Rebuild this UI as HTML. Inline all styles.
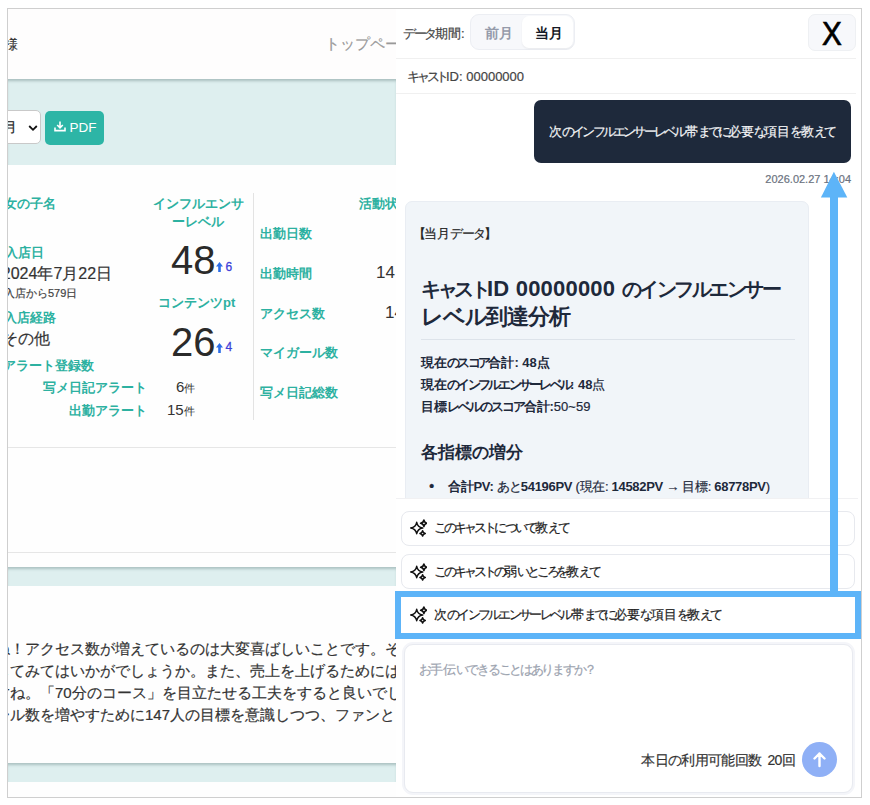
<!DOCTYPE html>
<html><head><meta charset="utf-8">
<style>
*{box-sizing:border-box;margin:0;padding:0}
html,body{width:870px;height:805px;background:#fff;overflow:hidden;font-family:"Liberation Sans",sans-serif;color:#333}
.a{position:absolute;white-space:nowrap;-webkit-text-stroke:0.2px currentColor}
b,.bd{-webkit-text-stroke:0}
#frame{position:absolute;left:7px;top:8px;width:855px;height:790px;border:1px solid #cfcfcf;overflow:hidden;background:#fefefe}
#left{position:absolute;left:0;top:0;width:388px;height:788px;overflow:hidden}
#panel{position:absolute;left:388px;top:0;width:465px;height:788px;background:#fff;overflow:hidden}
</style></head><body>
<div id="frame">
<div id="left">
<div class="a" style="left:0px;top:0px;width:388px;height:70px;background:#fefdfd"></div>
<div class="a" style="top:25.50px;font-size:14px;line-height:18px;color:#333;left:-4.00px;">様</div>
<div class="a" style="top:26.00px;font-size:15px;line-height:18px;color:#999;left:317.00px;">トップページ</div>
<div class="a" style="left:0px;top:70px;width:388px;height:86px;background:#deefef;box-shadow:inset 0 3px 3px -1px #a9bfbf"></div>
<div class="a" style="left:-20px;top:101px;width:53px;height:34px;background:#fff;border:1px solid #c9c9c9;border-radius:5px"></div>
<div class="a" style="top:109.00px;font-size:14px;line-height:18px;color:#222;left:-5.00px;">月</div>
<svg class="a" style="left:20px;top:115px" width="10" height="8" viewBox="0 0 10 8"><path d="M1.2 2 L5 5.8 L8.8 2" fill="none" stroke="#111" stroke-width="1.8"/></svg>
<div class="a" style="left:37px;top:102px;width:59px;height:34px;background:#2db5a6;border-radius:5px"></div>
<svg class="a" style="left:46px;top:112px" width="12" height="11" viewBox="0 0 12 11"><path d="M6 0.5 V6.5 M3.2 4 L6 6.8 L8.8 4 M1 6.5 V9.6 H11 V6.5" fill="none" stroke="#fff" stroke-width="1.6"/></svg>
<div class="a" style="top:109.50px;font-size:13.5px;line-height:18px;color:#fff;left:61.50px;-webkit-text-stroke:0;">PDF</div>
<div class="a" style="top:186.00px;font-size:13px;line-height:18px;color:#2db1a1;left:-3.60px;font-weight:bold;-webkit-text-stroke:0;">女の子名</div>
<div class="a" style="top:235.00px;font-size:13px;line-height:18px;color:#2db1a1;left:-3.50px;font-weight:bold;-webkit-text-stroke:0;">入店日</div>
<div class="a" style="top:255.00px;font-size:16px;line-height:20px;color:#333;left:-6.20px;">2024年7月22日</div>
<div class="a" style="top:277.00px;font-size:11px;line-height:14px;color:#444;left:-4.00px;">入店から579日</div>
<div class="a" style="top:300.00px;font-size:13px;line-height:18px;color:#2db1a1;left:-4.30px;font-weight:bold;-webkit-text-stroke:0;">入店経路</div>
<div class="a" style="top:319.50px;font-size:16px;line-height:20px;color:#333;left:-6.00px;">その他</div>
<div class="a" style="top:348.00px;font-size:13px;line-height:18px;color:#2db1a1;left:-5.40px;font-weight:bold;-webkit-text-stroke:0;">アラート登録数</div>
<div class="a" style="top:370.00px;font-size:13px;line-height:18px;color:#2db1a1;left:34.50px;font-weight:bold;-webkit-text-stroke:0;">写メ日記アラート</div>
<div class="a" style="top:393.00px;font-size:13px;line-height:18px;color:#2db1a1;left:60.50px;font-weight:bold;-webkit-text-stroke:0;">出勤アラート</div>
<div class="a" style="top:369.00px;font-size:15px;line-height:18px;color:#333;left:168.00px;-webkit-text-stroke:0;">6<span style="font-size:11px">件</span></div>
<div class="a" style="top:392.00px;font-size:15px;line-height:18px;color:#333;left:159.00px;-webkit-text-stroke:0;">15<span style="font-size:11px">件</span></div>
<div class="a" style="left:142px;top:185.5px;width:96px;font-size:13px;line-height:18px;text-align:center;white-space:normal;color:#2db1a1;font-weight:bold;-webkit-text-stroke:0;">インフルエンサーレベル</div>
<div class="a" style="top:229.00px;font-size:40px;line-height:44px;color:#2a2a2a;left:163.00px;-webkit-text-stroke:0;">48</div>
<svg class="a" style="left:208px;top:253.0px" width="7" height="10" viewBox="0 0 7 10"><path d="M3.5 0 L7 4.6 L4.8 4.6 L4.8 10 L2.2 10 L2.2 4.6 L0 4.6Z" fill="#2b6de8"/></svg>
<div class="a" style="top:249.50px;font-size:12px;line-height:16px;color:#3f3fd8;left:217.50px;-webkit-text-stroke:0.3px #3f3fd8;">6</div>
<div class="a" style="top:285.00px;font-size:13px;line-height:18px;color:#2db1a1;left:150.00px;font-weight:bold;-webkit-text-stroke:0;">コンテンツpt</div>
<div class="a" style="top:310.50px;font-size:40px;line-height:44px;color:#2a2a2a;left:163.00px;-webkit-text-stroke:0;">26</div>
<svg class="a" style="left:208px;top:333.5px" width="7" height="10" viewBox="0 0 7 10"><path d="M3.5 0 L7 4.6 L4.8 4.6 L4.8 10 L2.2 10 L2.2 4.6 L0 4.6Z" fill="#2b6de8"/></svg>
<div class="a" style="top:330.00px;font-size:12px;line-height:16px;color:#3f3fd8;left:217.50px;-webkit-text-stroke:0.3px #3f3fd8;">4</div>
<div class="a" style="left:244.5px;top:184px;width:1px;height:227px;background:#e3e3e3"></div>
<div class="a" style="top:186.00px;font-size:13px;line-height:18px;color:#2db1a1;left:351.00px;font-weight:bold;-webkit-text-stroke:0;">活動状況</div>
<div class="a" style="top:216.00px;font-size:13px;line-height:18px;color:#2db1a1;left:252.00px;font-weight:bold;-webkit-text-stroke:0;">出勤日数</div>
<div class="a" style="top:256.00px;font-size:13px;line-height:18px;color:#2db1a1;left:252.00px;font-weight:bold;-webkit-text-stroke:0;">出勤時間</div>
<div class="a" style="top:295.50px;font-size:13px;line-height:18px;color:#2db1a1;left:252.00px;font-weight:bold;-webkit-text-stroke:0;">アクセス数</div>
<div class="a" style="top:335.00px;font-size:13px;line-height:18px;color:#2db1a1;left:252.00px;font-weight:bold;-webkit-text-stroke:0;">マイガール数</div>
<div class="a" style="top:375.30px;font-size:13px;line-height:18px;color:#2db1a1;left:252.00px;font-weight:bold;-webkit-text-stroke:0;">写メ日記総数</div>
<div class="a" style="top:254.00px;font-size:17px;line-height:20px;color:#333;left:368.00px;-webkit-text-stroke:0;">14</div>
<div class="a" style="top:294.00px;font-size:17px;line-height:20px;color:#333;left:377.00px;-webkit-text-stroke:0;">14582</div>
<div class="a" style="left:0px;top:438px;width:388px;height:1px;background:#e6e6e6"></div>
<div class="a" style="left:0px;top:543px;width:388px;height:1px;background:#e6e6e6"></div>
<div class="a" style="left:0px;top:558px;width:388px;height:19px;background:#deefef;box-shadow:inset 0 3px 3px -1px #abc1c1"></div>
<div class="a" style="left:-13px;top:629.2px;font-size:15px;line-height:22.1px;color:#333">ね！アクセス数が増えているのは大変喜ばしいことです。そ<br>してみてはいかがでしょうか。また、売上を上げるためには<br>すね。「70分のコース」を目立たせる工夫をすると良いでしょう<br>ール数を増やすために147人の目標を意識しつつ、ファンと</div>
<div class="a" style="left:0px;top:754px;width:388px;height:19px;background:#deefef;box-shadow:inset 0 3px 3px -1px #abc1c1"></div>
</div>
<div id="panel">
<div class="a" style="top:16.00px;font-size:13px;line-height:18px;color:#444;left:7.00px;"><span style="letter-spacing:-2.333px">データ</span>期間:</div>
<div class="a" style="left:74px;top:5px;width:105px;height:36px;background:#f7f8fb;border:1px solid #eceef3;border-radius:9px"></div>
<div class="a" style="left:126px;top:7px;width:51px;height:32px;background:#fff;border-radius:7px;box-shadow:0 1px 2px rgba(0,0,0,.06)"></div>
<div class="a" style="top:15.00px;font-size:14px;line-height:18px;color:#959baa;left:88.50px;font-weight:bold;-webkit-text-stroke:0;">前月</div>
<div class="a" style="top:15.00px;font-size:14px;line-height:18px;color:#151a26;left:138.50px;font-weight:bold;-webkit-text-stroke:0;">当月</div>
<div class="a" style="left:412px;top:5px;width:48px;height:37px;background:#f7f8fb;border:1px solid #eef0f3;border-radius:7px"></div>
<div class="a" style="left:412px;top:6px;width:48px;height:37px;line-height:37px;font-size:33px;color:#000;text-align:center;transform:scaleX(0.9);-webkit-text-stroke:0.7px #000">X</div>
<div class="a" style="left:0px;top:49px;width:460px;height:1px;background:#f0f0f0"></div>
<div class="a" style="top:59.00px;font-size:13px;line-height:18px;color:#444;left:11.00px;"><span style="letter-spacing:-3.25px">キャスト</span>ID: 00000000</div>
<div class="a" style="left:0px;top:84px;width:460px;height:1px;background:#f0f0f0"></div>
<div class="a" style="left:138px;top:91px;width:317px;height:63px;background:#1e293b;border-radius:7px"></div>
<div class="a" style="top:114.00px;font-size:13px;line-height:18px;color:#f3f4f6;left:153.00px;">次<span style="letter-spacing:-2.789px">のインフルエンサーレベル</span>帯<span style="letter-spacing:-2.789px">までに</span>必要<span style="letter-spacing:-2.789px">な</span>項目<span style="letter-spacing:-2.789px">を</span>教<span style="letter-spacing:-2.789px">えて</span></div>
<div class="a" style="top:162.00px;font-size:11px;line-height:16px;color:#6b7280;left:335.00px;width:120px;text-align:right;">2026.02.27 14:04</div>
<div class="a" style="left:9px;top:192px;width:404px;height:330px;background:#f1f5f9;border:1px solid #e9edf3;border-radius:7px"></div>
<div class="a" style="top:216.00px;font-size:13px;line-height:18px;color:#222;left:17.00px;"><span style="letter-spacing:-1.74px">【</span>当月<span style="letter-spacing:-1.74px">データ】</span></div>
<div class="a" style="left:25px;top:265.5px;font-size:22px;line-height:28.5px;color:#1e293b;font-weight:bold;-webkit-text-stroke:0;"><span style="font-size:20px;letter-spacing:-3.5px">キャスト</span><span style="letter-spacing:0.2px">ID 00000000 </span><span style="font-size:20px;letter-spacing:-2.5px">のインフルエンサー</span><br><span style="letter-spacing:-1.2px">レベル到達分析</span></div>
<div class="a" style="left:25px;top:330px;width:374px;height:1px;background:#dde3ea"></div>
<div class="a" style="top:344.50px;font-size:13px;line-height:18px;color:#1e293b;left:25.00px;"><b>現在<span style="letter-spacing:-2.65px">のスコア</span>合計: 48点</b></div>
<div class="a" style="top:366.50px;font-size:13px;line-height:18px;color:#1e293b;left:25.00px;"><b>現在<span style="letter-spacing:-2.75px">のインフルエンサーレベル</span>: 48</b>点</div>
<div class="a" style="top:388.50px;font-size:13px;line-height:18px;color:#1e293b;left:25.00px;"><b>目標<span style="letter-spacing:-2.071px">レベルのスコア</span>合計:</b>50~59</div>
<div class="a" style="top:431.50px;font-size:17px;line-height:24px;color:#1e293b;left:25.00px;font-weight:bold;-webkit-text-stroke:0;">各指標の増分</div>
<div class="a" style="top:468.00px;font-size:15px;line-height:18px;color:#1e293b;left:33.00px;">&#8226;</div>
<div class="a" style="top:469.00px;font-size:13px;line-height:18px;color:#1e293b;left:52.00px;letter-spacing:-0.3px;"><b>合計PV:</b> <span style="letter-spacing:-1.0px">あと</span><b>54196PV</b> (現在: <b>14582PV</b> → 目標: <b>68778PV</b>)</div>
<div class="a" style="left:0px;top:489px;width:465px;height:299px;background:#fff"></div>
<div class="a" style="left:0px;top:489px;width:462px;height:1px;background:#f1f1f3"></div>
<div class="a" style="left:5px;top:501.5px;width:454px;height:35px;border:1px solid #e7e9ee;border-radius:8px;background:#fff"></div>
<svg class="a" style="left:11px;top:509px" width="20" height="20" viewBox="0 0 20 20"><g fill="none" stroke="#111" stroke-width="1.5" stroke-linejoin="round"><path d="M5 -5.7 Q5.9 -0.9 11 0 Q5.9 0.9 5 5.7 Q4.1 0.9 -1 0 Q4.1 -0.9 5 -5.7Z" transform="translate(4.7 10)"/><path d="M3.3 -3.3 Q3.8 -0.5 6.6 0 Q3.8 0.5 3.3 3.3 Q2.8 0.5 0 0 Q2.8 -0.5 3.3 -3.3Z" transform="translate(13.6 5.3)"/><path d="M2.7 -2.7 Q3.1 -0.4 5.4 0 Q3.1 0.4 2.7 2.7 Q2.3 0.4 0 0 Q2.3 -0.4 2.7 -2.7Z" transform="translate(12.9 15.4)"/></g></svg>
<div class="a" style="top:510.00px;font-size:13px;line-height:18px;color:#222;left:38.00px;"><span style="letter-spacing:-2.917px">このキャストについて</span>教<span style="letter-spacing:-2.917px">えて</span></div>
<div class="a" style="left:5px;top:544.5px;width:454px;height:35px;border:1px solid #e7e9ee;border-radius:8px;background:#fff"></div>
<svg class="a" style="left:11px;top:553px" width="20" height="20" viewBox="0 0 20 20"><g fill="none" stroke="#111" stroke-width="1.5" stroke-linejoin="round"><path d="M5 -5.7 Q5.9 -0.9 11 0 Q5.9 0.9 5 5.7 Q4.1 0.9 -1 0 Q4.1 -0.9 5 -5.7Z" transform="translate(4.7 10)"/><path d="M3.3 -3.3 Q3.8 -0.5 6.6 0 Q3.8 0.5 3.3 3.3 Q2.8 0.5 0 0 Q2.8 -0.5 3.3 -3.3Z" transform="translate(13.6 5.3)"/><path d="M2.7 -2.7 Q3.1 -0.4 5.4 0 Q3.1 0.4 2.7 2.7 Q2.3 0.4 0 0 Q2.3 -0.4 2.7 -2.7Z" transform="translate(12.9 15.4)"/></g></svg>
<div class="a" style="top:554.00px;font-size:13px;line-height:18px;color:#222;left:38.00px;"><span style="letter-spacing:-3.05px">このキャストの</span>弱<span style="letter-spacing:-3.05px">いところを</span>教<span style="letter-spacing:-3.05px">えて</span></div>
<div class="a" style="left:5px;top:588px;width:454px;height:37px;background:#fff"></div>
<svg class="a" style="left:11px;top:596px" width="20" height="20" viewBox="0 0 20 20"><g fill="none" stroke="#111" stroke-width="1.5" stroke-linejoin="round"><path d="M5 -5.7 Q5.9 -0.9 11 0 Q5.9 0.9 5 5.7 Q4.1 0.9 -1 0 Q4.1 -0.9 5 -5.7Z" transform="translate(4.7 10)"/><path d="M3.3 -3.3 Q3.8 -0.5 6.6 0 Q3.8 0.5 3.3 3.3 Q2.8 0.5 0 0 Q2.8 -0.5 3.3 -3.3Z" transform="translate(13.6 5.3)"/><path d="M2.7 -2.7 Q3.1 -0.4 5.4 0 Q3.1 0.4 2.7 2.7 Q2.3 0.4 0 0 Q2.3 -0.4 2.7 -2.7Z" transform="translate(12.9 15.4)"/></g></svg>
<div class="a" style="top:597.00px;font-size:13px;line-height:18px;color:#222;left:38.00px;">次<span style="letter-spacing:-2.704px">のインフルエンサーレベル</span>帯<span style="letter-spacing:-2.704px">までに</span>必要<span style="letter-spacing:-2.704px">な</span>項目<span style="letter-spacing:-2.704px">を</span>教<span style="letter-spacing:-2.704px">えて</span></div>
<div class="a" style="left:8px;top:635px;width:449px;height:149px;border:1px solid #e8eaf0;border-radius:9px;background:#fff;box-shadow:0 0 0 2px #f4f5f9"></div>
<div class="a" style="top:652.00px;font-size:13px;line-height:18px;color:#9ca3af;left:23.00px;"><span style="letter-spacing:-2.286px">お</span>手伝<span style="letter-spacing:-2.286px">いできることはありますか？</span></div>
<div class="a" style="top:741.50px;font-size:14px;line-height:18px;color:#333;left:199.00px;width:200px;text-align:right;letter-spacing:-0.7px;">本日の利用可能回数&nbsp; 20回</div>
<div class="a" style="left:406px;top:732.5px;width:35px;height:35px;border-radius:50%;background:#8fb0f6"></div>
<svg class="a" style="left:414px;top:741px" width="19" height="19" viewBox="0 0 19 19"><path d="M9.5 3.5 V16 M4.5 8.5 L9.5 3.5 L14.5 8.5" fill="none" stroke="#fff" stroke-width="2.4" stroke-linecap="round" stroke-linejoin="round"/></svg>
</div>
<div class="a" style="left:821.6px;top:188px;width:8.5px;height:396px;background:#5db4f8"></div>
<div class="a" style="left:387px;top:582.3px;width:465.5px;height:48.2px;border:6.5px solid #5db4f8"></div>
<svg class="a" style="left:812px;top:162px" width="30" height="28" viewBox="0 0 30 28"><path d="M13.9 0.8 L27.3 26.6 L0.9 26.6 Z" fill="#5db4f8"/></svg>
</div>
</body></html>
